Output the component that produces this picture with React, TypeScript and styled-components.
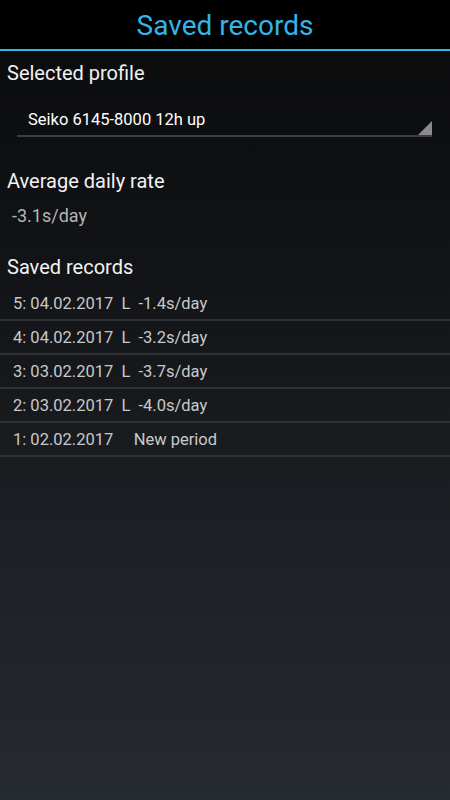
import * as React from 'react'
import styled, { createGlobalStyle } from 'styled-components'

const GlobalStyle = createGlobalStyle`
    html, body {
        margin: 0;
        padding: 0;
        height: 100%;
        background: #0a0a0b;
    }
    #root {
        height: 100%;
    }
`

const Screen = styled.div`
    width: 450px;
    height: 800px;
    display: flex;
    flex-direction: column;
    background: linear-gradient(to bottom, #0a0a0b 0%, #121417 35%, #1c1f23 65%, #262a31 100%);
    font-family: Roboto, 'Noto Sans', sans-serif;
    color: #ffffff;
    overflow: hidden;
`

const ActionBar = styled.header`
    height: 49px;
    flex: none;
    display: flex;
    align-items: center;
    justify-content: center;
    background: #000;
    border-bottom: 2px solid #33b5e5;
`

const Title = styled.h1`
    margin: 0;
    padding-top: 1px;
    font-size: 28px;
    font-weight: 400;
    color: #33b5e5;
`

const Content = styled.main`
    display: flex;
    flex-direction: column;
`

const SectionLabel = styled.div<{ top: number }>`
    padding: ${({ top }) => top}px 7px 0;
    font-size: 20px;
    line-height: 24px;
    color: #f2f2f2;
`

const Spinner = styled.div`
    position: relative;
    margin: 18px 18px 0 17px;
    height: 32px;
    padding-left: 11px;
    display: flex;
    align-items: center;
    font-size: 16.5px;
    color: #ffffff;
    border-bottom: 2px solid #3c3d3f;
`

const SpinnerCorner = styled.span`
    position: absolute;
    right: 0;
    bottom: 0;
    width: 0;
    height: 0;
    border-left: 14px solid transparent;
    border-bottom: 14px solid #8b8b8d;
`

const Value = styled.div`
    padding: 12px 12px 0;
    font-size: 18px;
    line-height: 22px;
    color: #b4b4b4;
`

const RecordList = styled.ul`
    list-style: none;
    margin: 8px 0 0;
    padding: 0;
`

const Record = styled.li`
    height: 32px;
    display: flex;
    align-items: center;
    padding-left: 13px;
    border-bottom: 2px solid #2f3134;
    font-size: 16.5px;
    color: #c9c9c9;
    white-space: pre;
`

const records = [
    { n: 5, date: '04.02.2017', kind: 'L', rate: '-1.4s/day' },
    { n: 4, date: '04.02.2017', kind: 'L', rate: '-3.2s/day' },
    { n: 3, date: '03.02.2017', kind: 'L', rate: '-3.7s/day' },
    { n: 2, date: '03.02.2017', kind: 'L', rate: '-4.0s/day' },
    { n: 1, date: '02.02.2017', kind: '', rate: 'New period' },
]

export default function App() {
    return (
        <>
            <GlobalStyle />
            <Screen>
                <ActionBar>
                    <Title>Saved records</Title>
                </ActionBar>
                <Content>
                    <SectionLabel top={10}>Selected profile</SectionLabel>
                    <Spinner>
                        Seiko 6145-8000 12h up
                        <SpinnerCorner />
                    </Spinner>
                    <SectionLabel top={32}>Average daily rate</SectionLabel>
                    <Value>-3.1s/day</Value>
                    <SectionLabel top={28}>Saved records</SectionLabel>
                    <RecordList>
                        {records.map(r => (
                            <Record key={r.n}>
                                {r.kind
                                    ? `${r.n}: ${r.date}  ${r.kind}  ${r.rate}`
                                    : `${r.n}: ${r.date}     ${r.rate}`}
                            </Record>
                        ))}
                    </RecordList>
                </Content>
            </Screen>
        </>
    )
}
